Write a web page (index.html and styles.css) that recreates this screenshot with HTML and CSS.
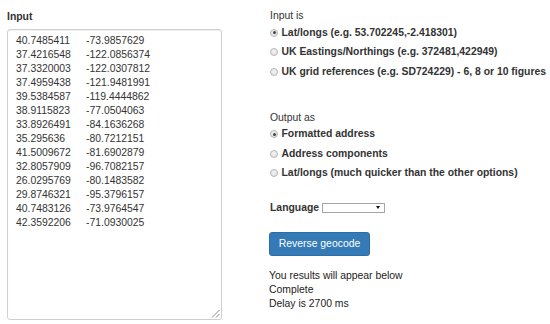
FILE: index.html
```html
<!DOCTYPE html>
<html>
<head>
<meta charset="utf-8">
<link rel="stylesheet" href="styles.css">
</head>
<body>
<div class="page">
  <div class="left">
    <div class="field-label">Input</div>
    <div class="input-box" role="textbox" aria-multiline="true">
      <span>40.7485411</span><span>-73.9857629</span>
      <span>37.4216548</span><span>-122.0856374</span>
      <span>37.3320003</span><span>-122.0307812</span>
      <span>37.4959438</span><span>-121.9481991</span>
      <span>39.5384587</span><span>-119.4444862</span>
      <span>38.9115823</span><span>-77.0504063</span>
      <span>33.8926491</span><span>-84.1636268</span>
      <span>35.295636</span><span>-80.7212151</span>
      <span>41.5009672</span><span>-81.6902879</span>
      <span>32.8057909</span><span>-96.7082157</span>
      <span>26.0295769</span><span>-80.1483582</span>
      <span>29.8746321</span><span>-95.3796157</span>
      <span>40.7483126</span><span>-73.9764547</span>
      <span>42.3592206</span><span>-71.0930025</span>
      <svg class="grip" width="9" height="9" viewBox="0 0 9 9"><path d="M1 8.5 L8.5 1 M5 8.5 L8.5 5" stroke="#8a8a8a" stroke-width="1" fill="none"/></svg>
    </div>
  </div>
  <div class="right">
    <div class="group-title">Input is</div>
    <label class="radio-row"><span class="radio checked"></span><span class="radio-text">Lat/longs (e.g. 53.702245,-2.418301)</span></label>
    <label class="radio-row"><span class="radio"></span><span class="radio-text">UK Eastings/Northings (e.g. 372481,422949)</span></label>
    <label class="radio-row"><span class="radio"></span><span class="radio-text">UK grid references (e.g. SD724229) - 6, 8 or 10 figures</span></label>

    <div class="group-title output-title">Output as</div>
    <label class="radio-row"><span class="radio checked"></span><span class="radio-text">Formatted address</span></label>
    <label class="radio-row"><span class="radio"></span><span class="radio-text">Address components</span></label>
    <label class="radio-row"><span class="radio"></span><span class="radio-text">Lat/longs (much quicker than the other options)</span></label>

    <div class="language-row">
      <span class="language-label">Language</span>
      <span class="select-wrap"><select class="language-select"><option></option></select></span>
    </div>

    <button class="btn-primary">Reverse geocode</button>

    <div class="status">
      <div>You results will appear below</div>
      <div>Complete</div>
      <div>Delay is 2700 ms</div>
    </div>
  </div>
</div>
</body>
</html>
```
FILE: styles.css
```css
html, body {
  margin: 0;
  padding: 0;
  background: #fff;
}
body {
  font-family: "Liberation Sans", Arial, sans-serif;
  font-size: 10.4px;
  color: #333;
}
.page {
  display: grid;
  grid-template-columns: 215px auto;
  column-gap: 47px;
  padding-left: 7px;
}
.left {
  display: flex;
  flex-direction: column;
}
.field-label {
  font-weight: bold;
  line-height: 14px;
  margin-top: 10px;
}
.input-box {
  position: relative;
  margin-top: 5px;
  width: 215px;
  height: 291px;
  box-sizing: border-box;
  border: 1px solid #cfcfcf;
  border-radius: 3px;
  box-shadow: inset 0 1px 1px rgba(0,0,0,0.06);
  padding: 4px 8px 0 8px;
  display: grid;
  grid-template-columns: 70px auto;
  align-content: start;
  line-height: 14px;
  color: #333;
  background: #fff;
}
.grip {
  position: absolute;
  right: 1px;
  bottom: 1px;
}
.right {
  display: flex;
  flex-direction: column;
  align-items: flex-start;
  padding-top: 9px;
}
.group-title {
  line-height: 14px;
  padding-left: 1px;
}
.output-title {
  margin-top: 29px;
}
.radio-row {
  height: 19.5px;
  display: flex;
  align-items: center;
  font-weight: bold;
}
.radio {
  width: 8px;
  height: 8px;
  box-sizing: border-box;
  margin-left: 1px;
  margin-right: 3.5px;
  border-radius: 50%;
  border: 1px solid #b8b8b8;
  background: radial-gradient(circle at 50% 40%, #f4f4f4, #dcdcdc);
  display: flex;
  align-items: center;
  justify-content: center;
}
.radio.checked::after {
  content: "";
  width: 3px;
  height: 3px;
  border-radius: 50%;
  background: #444;
}
.radio-text {
  line-height: 14px;
}
.language-row {
  margin-top: 17.5px;
  height: 14px;
  display: flex;
  align-items: center;
  gap: 3px;
}
.language-label {
  font-weight: bold;
  line-height: 14px;
  padding-left: 1px;
}
.select-wrap {
  position: relative;
  display: inline-block;
  width: 63px;
  height: 10px;
}
.language-select {
  appearance: none;
  -webkit-appearance: none;
  width: 63px;
  height: 10px;
  box-sizing: border-box;
  border: 1px solid #a6a6a6;
  border-radius: 0;
  background: #fff;
  margin: 0;
  padding: 0;
  display: block;
  font-size: 8px;
}
.select-wrap::after {
  content: "";
  position: absolute;
  right: 5px;
  top: 3px;
  width: 0;
  height: 0;
  border-left: 2.5px solid transparent;
  border-right: 2.5px solid transparent;
  border-top: 3px solid #111;
  pointer-events: none;
}
.btn-primary {
  margin-top: 17.5px;
  width: 101px;
  height: 24px;
  border: 1px solid #2e6da4;
  border-radius: 3px;
  background: #337ab7;
  color: #fff;
  font-family: "Liberation Sans", Arial, sans-serif;
  font-size: 10.4px;
  padding: 0;
  line-height: 22px;
}
.status {
  margin-top: 13px;
  line-height: 14px;
  color: #222;
}
```
